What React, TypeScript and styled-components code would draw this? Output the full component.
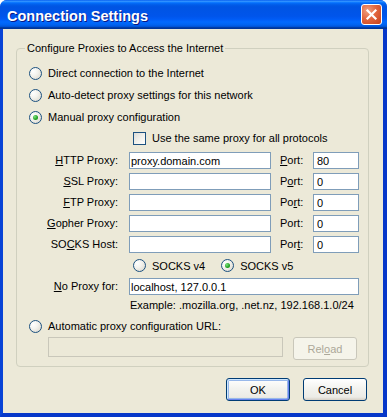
import React from 'react'
import styled, { createGlobalStyle } from 'styled-components'

const GlobalStyle = createGlobalStyle`
    html, body {
        margin: 0;
        padding: 0;
        background: #ffffff;
    }
    body {
        font-family: 'Liberation Sans', Arial, sans-serif;
        font-size: 11px;
        color: #000000;
    }
    * {
        box-sizing: border-box;
    }
`

interface Proxy {
    label: React.ReactNode
    value: string
    port: React.ReactNode
    portValue: string
}

const proxies: Proxy[] = [
    { label: <><u>H</u>TTP Proxy:</>, value: 'proxy.domain.com', port: <><u>P</u>ort:</>, portValue: '80' },
    { label: <><u>S</u>SL Proxy:</>, value: '', port: <>P<u>o</u>rt:</>, portValue: '0' },
    { label: <><u>F</u>TP Proxy:</>, value: '', port: <>Po<u>r</u>t:</>, portValue: '0' },
    { label: <><u>G</u>opher Proxy:</>, value: '', port: <>Port:</>, portValue: '0' },
    { label: <>SO<u>C</u>KS Host:</>, value: '', port: <>Por<u>t</u>:</>, portValue: '0' },
]

const App = () => {
    return (
        <>
            <GlobalStyle />
            <Window>
                <TitleBar>
                    <Title>Connection Settings</Title>
                    <CloseButton>
                        <svg width='19' height='19' viewBox='0 0 19 19'>
                            <path d='M5.5 5.5 L13.5 13.5 M13.5 5.5 L5.5 13.5' stroke='#ffffff' strokeWidth='2.2' strokeLinecap='square' />
                        </svg>
                    </CloseButton>
                </TitleBar>
                <Frame>
                    <GroupBox>
                        <Legend>Configure Proxies to Access the Internet</Legend>
                        <GroupBody>
                            <RadioRow>
                                <Radio />
                                <span>Direct connection to the Internet</span>
                            </RadioRow>
                            <RadioRow>
                                <Radio />
                                <span>Auto-detect proxy settings for this network</span>
                            </RadioRow>
                            <RadioRow>
                                <Radio checked />
                                <span>Manual proxy configuration</span>
                            </RadioRow>
                            <ProxyGrid>
                                <WideCell>
                                    <Checkbox />
                                    <span>Use the same proxy for all protocols</span>
                                </WideCell>
                                {proxies.map((p, i) => (
                                    <React.Fragment key={i}>
                                        <FieldLabel>{p.label}</FieldLabel>
                                        <TextBox readOnly value={p.value} />
                                        <PortLabel>{p.port}</PortLabel>
                                        <TextBox readOnly value={p.portValue} pad='3px' />
                                    </React.Fragment>
                                ))}
                                <WideCell>
                                    <SocksOption>
                                        <Radio />
                                        <span>SOCKS v4</span>
                                    </SocksOption>
                                    <SocksOption>
                                        <Radio checked />
                                        <span>SOCKS v5</span>
                                    </SocksOption>
                                </WideCell>
                                <FieldLabel>
                                    <u>N</u>o Proxy for:
                                </FieldLabel>
                                <WideInput readOnly value='localhost, 127.0.0.1' />
                                <Example>Example: .mozilla.org, .net.nz, 192.168.1.0/24</Example>
                            </ProxyGrid>
                            <RadioRow margin='3px 0 0 0'>
                                <Radio />
                                <span>Automatic proxy configuration URL:</span>
                            </RadioRow>
                            <UrlRow>
                                <DisabledBox readOnly value='' />
                                <Button disabled>
                                    Rel<u>o</u>ad
                                </Button>
                            </UrlRow>
                        </GroupBody>
                    </GroupBox>
                    <ButtonRow>
                        <Button isDefault>OK</Button>
                        <Button>Cancel</Button>
                    </ButtonRow>
                </Frame>
            </Window>
        </>
    )
}

interface StyledProps {
    checked?: boolean
    margin?: string
    pad?: string
    isDefault?: boolean
}

const Window = styled.div`
    width: 387px;
    height: 417px;
    display: flex;
    flex-direction: column;
    background: #0a4ee0;
    border-radius: 7px 7px 0 0;
`

const TitleBar = styled.div`
    height: 29px;
    display: flex;
    align-items: center;
    padding: 0 5px 0 7px;
    border-radius: 7px 7px 0 0;
    background: linear-gradient(
        180deg,
        #0058ee 0%,
        #3593ff 4%,
        #288eff 6%,
        #127dff 8%,
        #036ffc 10%,
        #0262ee 14%,
        #0057e5 20%,
        #0054e3 24%,
        #0055eb 56%,
        #005bf5 66%,
        #026afe 76%,
        #0062ef 86%,
        #0052d6 92%,
        #0040ab 94%,
        #003092 100%
    );
`

const Title = styled.div`
    font-family: 'Liberation Sans', Arial, sans-serif;
    font-weight: bold;
    font-size: 14.5px;
    color: #ffffff;
    text-shadow: 1px 1px 0 #0a1883;
    padding-top: 2px;
`

const CloseButton = styled.div`
    margin-left: auto;
    width: 21px;
    height: 21px;
    border: 1px solid #ffffff;
    border-radius: 3px;
    display: flex;
    align-items: center;
    justify-content: center;
    background: radial-gradient(circle at 30% 30%, #f0a080 0%, #e2673f 45%, #c7401a 100%);
`

const Frame = styled.div`
    flex: 1;
    display: flex;
    flex-direction: column;
    background: #ece9d8;
    border-left: 3px solid #0843d6;
    border-right: 4px solid #0637c9;
    border-bottom: 4px solid #0637c9;
    padding: 0 14px 0 13px;
`

const GroupBox = styled.fieldset`
    margin: 13px 0 0 0;
    padding: 0;
    border: 1px solid #d0d0bf;
    border-radius: 4px;
    min-width: 0;
`

const Legend = styled.legend`
    margin-left: 8px;
    padding: 0 2px;
    line-height: 13px;
`

const GroupBody = styled.div`
    display: flex;
    flex-direction: column;
    padding: 7px 9px 8px 12px;
`

const RadioRow = styled.div<StyledProps>`
    display: flex;
    align-items: center;
    gap: 6px;
    height: 22px;
    margin: ${(props) => (props.margin ? props.margin : '0px')};
`

const Radio = styled.span<StyledProps>`
    position: relative;
    flex: none;
    width: 13px;
    height: 13px;
    border-radius: 50%;
    border: 1px solid #1c5180;
    background: radial-gradient(circle at 30% 30%, #ffffff 0%, #f4f3ee 40%, #d6d3c8 100%);
    &::after {
        content: '';
        display: ${(props) => (props.checked ? 'block' : 'none')};
        position: absolute;
        left: 3px;
        top: 3px;
        width: 5px;
        height: 5px;
        border-radius: 50%;
        background: radial-gradient(circle at 35% 35%, #7ee17e 0%, #21a121 60%, #1a8a1a 100%);
    }
`

const Checkbox = styled.span`
    flex: none;
    width: 13px;
    height: 13px;
    border: 1px solid #1c5180;
    background: linear-gradient(135deg, #dcdcd7 0%, #f4f3ee 60%, #ffffff 100%);
`

const ProxyGrid = styled.div`
    display: grid;
    grid-template-columns: 100px 142px 42px 46px;
    grid-template-rows: 20px repeat(7, 17px) 13px;
    row-gap: 4px;
`

const WideCell = styled.div`
    grid-column: 2 / 5;
    display: flex;
    align-items: center;
    gap: 6px;
    padding-left: 4px;
`

const SocksOption = styled.div`
    display: flex;
    align-items: center;
    gap: 6px;
    margin-right: 10px;
`

const FieldLabel = styled.label`
    text-align: right;
    padding-right: 11px;
    line-height: 17px;
    white-space: nowrap;
`

const PortLabel = styled.label`
    padding-left: 9px;
    line-height: 17px;
`

const TextBox = styled.input<StyledProps>`
    width: 100%;
    height: 17px;
    margin: 0;
    border: 1px solid #7f9db9;
    background: #ffffff;
    padding: 0 0 0 ${(props) => (props.pad ? props.pad : '1px')};
    font-family: 'Liberation Sans', Arial, sans-serif;
    font-size: 11px;
    color: #000000;
    outline: none;
`

const WideInput = styled(TextBox)`
    grid-column: 2 / 5;
`

const Example = styled.div`
    grid-column: 2 / 5;
    padding-left: 1px;
    line-height: 13px;
`

const UrlRow = styled.div`
    display: flex;
    align-items: flex-start;
    gap: 10px;
    height: 21px;
    padding-left: 19px;
`

const DisabledBox = styled.input`
    width: 235px;
    height: 20px;
    margin: 0;
    border: 1px solid #c9c7ba;
    background: #ece9d8;
    outline: none;
`

const Button = styled.button<StyledProps>`
    width: 64px;
    height: 23px;
    margin: 0;
    padding: 0;
    border: 1px solid ${(props) => (props.disabled ? '#c9c7ba' : '#003c74')};
    border-radius: 3px;
    font-family: 'Liberation Sans', Arial, sans-serif;
    font-size: 11px;
    color: ${(props) => (props.disabled ? '#aca899' : '#000000')};
    background: ${(props) =>
        props.disabled
            ? '#f5f4ea'
            : 'linear-gradient(180deg, #ffffff 0%, #f3f3ef 45%, #ecebe6 86%, #d6d0c5 100%)'};
    box-shadow: ${(props) =>
        props.isDefault ? 'inset 1px 1px 0 #cee7ff, inset -1px -1px 0 #6982ee, inset 0 0 0 2px #98b8ea' : 'none'};
`

const ButtonRow = styled.div`
    display: flex;
    justify-content: flex-end;
    gap: 13px;
    margin-top: 11px;
    padding-right: 2px;
    & > button:first-child {
        height: 23px;
    }
`

export default App
